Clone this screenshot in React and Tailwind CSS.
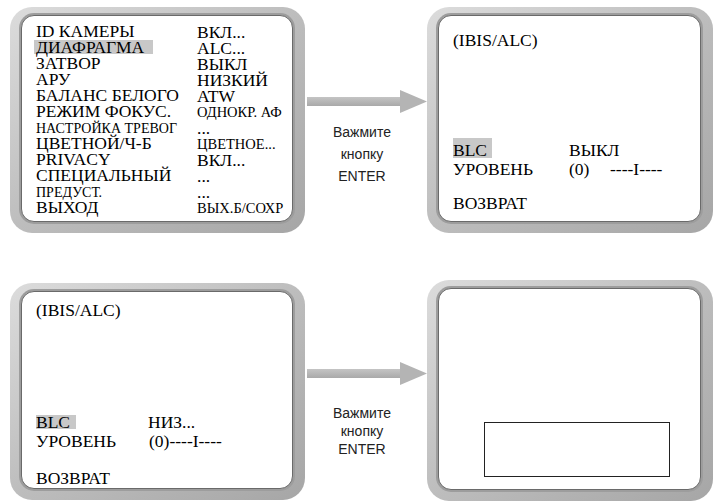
import React from 'react';

const serif = { fontFamily: '"Liberation Serif", "Times New Roman", serif' };

const Frame = ({ className = '', innerClass = '', children }) => (
  <div
    className={`rounded-[22px] bg-linear-to-br from-[#dcdcdc] via-[#bdbdbd] to-[#a6a6a6] pt-[8px] pb-[11px] pl-[11px] pr-[12px] ${className}`}
  >
    <div
      className={`h-full rounded-[13px] border border-[#6a6a6a] bg-white shadow-[0_0_0_2px_#9d9d9d] ${innerClass}`}
    >
      {children}
    </div>
  </div>
);

const Arrow = () => (
  <svg width="120" height="23" viewBox="0 0 120 23" className="block ml-[2px]">
    <defs>
      <linearGradient id="shaft" x1="0" y1="0" x2="0" y2="1">
        <stop offset="0" stopColor="#c4c4c4" />
        <stop offset="1" stopColor="#a9a9a9" />
      </linearGradient>
    </defs>
    <rect x="0" y="7" width="96" height="9" fill="url(#shaft)" />
    <polygon points="93,0 120,11.5 93,23" fill="#b4b4b4" />
  </svg>
);

const menu = [
  ['ID КАМЕРЫ', 'ВКЛ...'],
  ['ДИАФРАГМА', 'ALC...', true],
  ['ЗАТВОР', 'ВЫКЛ'],
  ['АРУ', 'НИЗКИЙ'],
  ['БАЛАНС БЕЛОГО', 'ATW'],
  ['РЕЖИМ ФОКУС.', 'ОДНОКР. АФ', false, false, true],
  ['НАСТРОЙКА ТРЕВОГ', '...', false, true],
  ['ЦВЕТНОЙ/Ч-Б', 'ЦВЕТНОЕ...', false, false, true],
  ['PRIVACY', 'ВКЛ...'],
  ['СПЕЦИАЛЬНЫЙ', '...'],
  ['ПРЕДУСТ.', '...', false, true],
  ['ВЫХОД', 'ВЫХ.Б/СОХР', false, false, true],
];

const PressEnter = ({ className = '' }) => (
  <div
    className={`pr-[8px] text-center text-[14px] text-[#222] ${className}`}
    style={{ fontFamily: '"Liberation Sans", Arial, sans-serif' }}
  >
    <div>Важмите</div>
    <div>кнопку</div>
    <div>ENTER</div>
  </div>
);

export default function App() {
  return (
    <div className="w-[713px] h-[501px] bg-white overflow-hidden text-black" style={serif}>
      <div className="flex pt-[7px] pl-[10px]">
        <Frame className="w-[295px] h-[226px]">
          <div className="pl-[14px] pt-[8px]">
            {menu.map(([l, r, hl, smallL, smallR]) => (
              <div key={l} className="flex h-[16px] items-center">
                <div className="w-[161px] whitespace-nowrap">
                  <span
                    className={`inline-block leading-[14px] h-[14px] ${smallL ? 'text-[14px]' : 'text-[17.5px]'} ${hl ? 'bg-[#c8c8c8] -ml-[2px] pl-[2px] pr-[9px]' : ''}`}
                  >
                    {l}
                  </span>
                </div>
                <div className={`whitespace-nowrap leading-[14px] ${smallR ? 'text-[14.5px]' : 'text-[17.5px]'}`}>
                  {r}
                </div>
              </div>
            ))}
          </div>
        </Frame>

        <div className="w-[122px]">
          <div className="mt-[83px]">
            <Arrow />
          </div>
          <PressEnter className="mt-[8px] leading-[22px]" />
        </div>

        <Frame className="w-[286px] h-[226px]">
          <div className="pl-[14px] pt-[16px] text-[17.5px] whitespace-nowrap">
            <div className="h-[16px] leading-[16px]">(IBIS/ALC)</div>
            <div className="mt-[90px] flex h-[20px] items-end">
              <div className="w-[116px]">
                <div className="flex h-[20px] w-fit items-end bg-[#c8c8c8] pr-[5px]">
                  <span className="block h-[15px] leading-[15px]">BLC</span>
                </div>
              </div>
              <span className="block h-[15px] leading-[15px]">ВЫКЛ</span>
            </div>
            <div className="mt-[3px] flex h-[16px] items-center leading-[16px]">
              <div className="w-[116px]">УРОВЕНЬ</div>
              <div className="w-[41px]">(0)</div>
              <div>----I----</div>
            </div>
            <div className="mt-[18px] h-[16px] leading-[16px]">ВОЗВРАТ</div>
          </div>
        </Frame>
      </div>

      <div className="flex pl-[10px] mt-[47px]">
        <Frame className="mt-[3px] w-[295px] h-[217px]">
          <div className="pl-[14px] pt-[10px] text-[17.5px] whitespace-nowrap">
            <div className="h-[16px] leading-[16px]">(IBIS/ALC)</div>
            <div className="mt-[96px] flex h-[16px] items-center">
              <div className="w-[112px]">
                <span className="inline-block h-[14px] bg-[#c8c8c8] pr-[6px] leading-[14px]">BLC</span>
              </div>
              <div className="leading-[16px]">НИЗ...</div>
            </div>
            <div className="mt-[3px] flex h-[16px] items-center leading-[16px]">
              <div className="w-[113px]">УРОВЕНЬ</div>
              <div>(0)----I----</div>
            </div>
            <div className="mt-[21px] h-[16px] leading-[16px]">ВОЗВРАТ</div>
          </div>
        </Frame>

        <div className="w-[122px]">
          <div className="mt-[82px]">
            <Arrow />
          </div>
          <PressEnter className="mt-[19px] leading-[18px]" />
        </div>

        <Frame className="w-[286px] h-[221px]">
          <div className="pl-[45px] pt-[133px]">
            <div className="w-[186px] h-[55px] border border-[#222]" />
          </div>
        </Frame>
      </div>
    </div>
  );
}
